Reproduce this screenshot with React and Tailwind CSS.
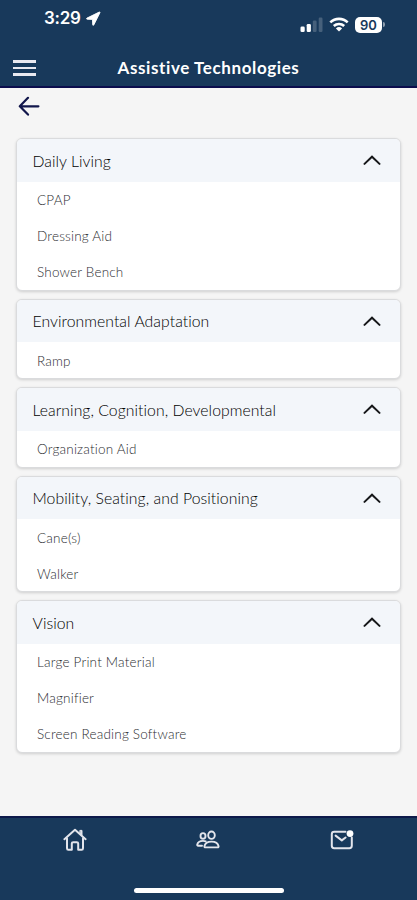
import { useState } from 'react'

const CATEGORIES = [
  { name: 'Daily Living', items: ['CPAP', 'Dressing Aid', 'Shower Bench'] },
  { name: 'Environmental Adaptation', items: ['Ramp'] },
  { name: 'Learning, Cognition, Developmental', items: ['Organization Aid'] },
  { name: 'Mobility, Seating, and Positioning', items: ['Cane(s)', 'Walker'] },
  { name: 'Vision', items: ['Large Print Material', 'Magnifier', 'Screen Reading Software'] },
]

function StatusBar() {
  return (
    <div className="flex h-12 items-start justify-between pl-11 pr-[32px] text-white">
      <div className="flex items-center pt-[7px]">
        <span className="font-['Inter'] text-[17px] leading-[22px] font-semibold tracking-[-0.3px]">3:29</span>
        <svg className="ml-[5px] h-[15px] w-[15px]" viewBox="0 0 15 15" fill="currentColor">
          <path d="M13.2 1.1 1 7.1c-.7.4-.5 1.1.2 1.1l5.3.2.2 5.3c0 .8.8.9 1.1.2l6.1-12.1c.3-.6-.1-1-.7-.7Z" stroke="currentColor" strokeWidth="0.9" />
        </svg>
      </div>
      <div className="flex items-center pt-4">
        <svg className="h-[17px] w-[23px]" viewBox="0 0 23 17" fill="currentColor">
          <rect x="0.5" y="10.5" width="4.2" height="5.5" rx="1.3" />
          <rect x="6.7" y="8" width="4.2" height="8" rx="1.3" />
          <rect x="12.8" y="4.6" width="3.8" height="11.4" rx="1.2" opacity="0.2" />
          <rect x="18.7" y="1.6" width="3.8" height="14.4" rx="1.2" opacity="0.2" />
        </svg>
        <svg className="ml-[6px] h-[15px] w-[20px]" viewBox="0 0 20 15" fill="none" stroke="currentColor" strokeWidth="2.6">
          <path d="M1.3 5.4a12.6 12.6 0 0 1 17.4 0" />
          <path d="M4.8 9a7.6 7.6 0 0 1 10.4 0" />
          <path d="M10 14.6 6.9 11.5a4.5 4.5 0 0 1 6.2 0Z" fill="currentColor" stroke="none" />
        </svg>
        <div className="ml-[6px] flex h-[16px] w-[27px] items-center justify-center rounded-[5px] bg-white pt-px font-['Inter'] text-[13px] leading-none font-semibold text-[#18395b]">
          90
        </div>
        <div className="ml-px h-[5px] w-[2px] rounded-r-full bg-white/50" />
      </div>
    </div>
  )
}

function HomeIcon() {
  return (
    <svg className="h-6 w-6" viewBox="0 0 24 24" fill="none" stroke="currentColor" strokeWidth="2" strokeLinecap="round" strokeLinejoin="round">
      <path d="M1.4 11.2 12 1.8l10.6 9.4" />
      <path d="M17.2 2.4h1.8v5l-1.8-1.6Z" fill="currentColor" strokeWidth="1" />
      <path d="M4 10.4v9.8c0 .9.5 1.5 1.4 1.5h3.4v-6.1c0-.9.5-1.4 1.4-1.4h3.6c.9 0 1.4.5 1.4 1.4v6.1h3.4c.9 0 1.4-.6 1.4-1.5v-9.8" />
    </svg>
  )
}

function PeopleIcon() {
  return (
    <svg className="h-6 w-6" viewBox="0 0 24 24" fill="none" stroke="currentColor" strokeWidth="1.9" strokeLinecap="round" strokeLinejoin="round">
      <ellipse cx="15.5" cy="7.2" rx="3.3" ry="3.7" />
      <path d="M15.5 13.6c-3.6 0-6.5 1.8-7.1 4.6-.1.7.3 1.2 1 1.2h12.2c.7 0 1.1-.5 1-1.2-.6-2.8-3.5-4.6-7.1-4.6Z" />
      <ellipse cx="7" cy="7.9" rx="2.5" ry="2.8" />
      <path d="M9.7 13.4c-.8-.4-1.7-.5-2.7-.5-3 0-5.3 1.5-5.8 3.8-.1.6.3 1.1.9 1.1H6" />
    </svg>
  )
}

function MailIcon() {
  return (
    <svg className="h-6 w-6" viewBox="0 0 24 24" fill="none" stroke="currentColor" strokeWidth="2" strokeLinecap="round" strokeLinejoin="round">
      <path d="M15.5 3.8H4.2c-1.4 0-2.4 1-2.4 2.4v11.6c0 1.4 1 2.4 2.4 2.4h15.2c1.4 0 2.4-1 2.4-2.4V9.5" />
      <path d="m5.6 7.6 6.2 4.8 3.8-2.9" />
      <circle cx="20" cy="5.6" r="3.4" fill="white" stroke="none" />
    </svg>
  )
}

function Category({ name, items }) {
  const [open, setOpen] = useState(true)

  return (
    <section className="overflow-hidden rounded-[6px] border border-[#dadbdd] bg-white shadow-[0_1px_3px_rgba(0,0,0,0.16)]">
      <button
        className="flex h-[42.5px] w-full items-center justify-between bg-[#f3f6fa] pl-[15.5px] pr-[19px] text-left"
        onClick={() => setOpen(!open)}
      >
        <span className="pt-px text-[15.75px] font-light tracking-[0.06px] text-black [font-variant-ligatures:none]">
          {name}
        </span>
        <svg
          className={`h-[10px] w-[18px] text-[#17181a] ${open ? '' : 'rotate-180'}`}
          viewBox="0 0 18 10"
          fill="none"
          stroke="currentColor"
          strokeWidth="2"
          strokeLinecap="round"
        >
          <path d="M1.5 8.9 9 1.7l7.5 7.2" />
        </svg>
      </button>
      {open && (
        <ul className="pl-5">
          {items.map(item => (
            <li key={item} className="flex h-9 items-center pt-[2px] text-[13.5px] font-light tracking-[0.2px] text-[#2b2d31]">
              {item}
            </li>
          ))}
        </ul>
      )}
    </section>
  )
}

export default function App() {
  return (
    <div className="flex h-[900px] w-full flex-col bg-[#f5f5f5] font-['Lato',sans-serif]">
      <header className="h-[88px] border-b-2 border-[#0b0d4d] bg-[#18395b]">
        <StatusBar />
        <div className="grid h-10 grid-cols-[48px_1fr_48px] items-center text-white">
          <button className="flex flex-col gap-[4px] pl-[13px]" aria-label="Menu">
            <span className="h-[2.5px] w-[23px] bg-[#e9e9f0]" />
            <span className="h-[2.5px] w-[23px] bg-[#e9e9f0]" />
            <span className="h-[2.5px] w-[23px] bg-[#e9e9f0]" />
          </button>
          <h1 className="text-center text-[17px] font-bold tracking-[0.6px]">Assistive Technologies</h1>
        </div>
      </header>

      <main className="flex-1 px-4">
        <button className="flex h-[50px] items-start pt-[8px] pl-[2px]" aria-label="Back">
          <svg
            className="h-[20px] w-[22px] text-[#11164b]"
            viewBox="0 0 22 20"
            fill="none"
            stroke="currentColor"
            strokeWidth="2.2"
            strokeLinecap="round"
            strokeLinejoin="round"
          >
            <path d="M10 1.8 1.8 10.3 10 18.6M2 10.3h18.4" />
          </svg>
        </button>
        <div className="flex flex-col gap-2">
          {CATEGORIES.map(category => (
            <Category key={category.name} {...category} />
          ))}
        </div>
      </main>

      <footer className="flex h-[84px] flex-col items-center border-t-2 border-[#0d1a4a] bg-[#18395b]">
        <nav className="flex h-[44px] w-full items-center justify-around px-[8px] text-[#e3e5ec]">
          <HomeIcon />
          <PeopleIcon />
          <MailIcon />
        </nav>
        <div className="mt-[26px] h-[5px] w-[150px] rounded-full bg-white" />
      </footer>
    </div>
  )
}
